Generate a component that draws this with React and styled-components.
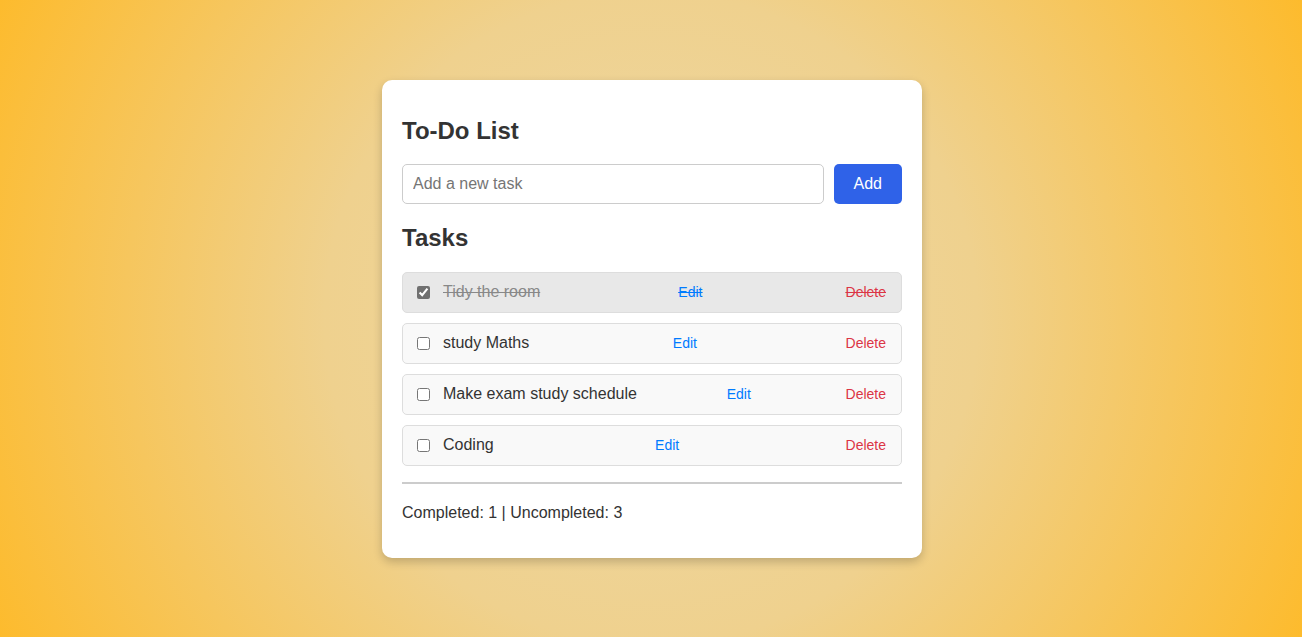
import React, { useState } from "react";
import styled, { createGlobalStyle } from "styled-components";

const GlobalStyle = createGlobalStyle`
  * { box-sizing: border-box; }
  body {
    margin: 0;
    font-family: "Liberation Sans", Arial, sans-serif;
    background: radial-gradient(circle, #edd8a6 0%, #efd18e 45%, #fdbb2d 100%);
    min-height: 100vh;
  }
`;

const Page = styled.div`
  min-height: 100vh;
  display: flex;
  align-items: center;
  justify-content: center;
  padding-left: 2px;
`;

const Card = styled.div`
  width: 540px;
  background: #fff;
  border-radius: 10px;
  padding: 20px;
  box-shadow: 0 4px 10px rgba(0, 0, 0, 0.2);
`;

const Title = styled.h2`
  font-size: 24px;
  color: #333;
  margin: ${props => props.margin};
`;

const AddRow = styled.div`
  display: flex;
  gap: 10px;
`;

const TaskInput = styled.input`
  flex: 1;
  padding: 10px;
  font-size: 16px;
  font-family: inherit;
  border: 1px solid #ccc;
  border-radius: 5px;
  outline: none;
`;

const AddButton = styled.button`
  padding: 10px 20px;
  font-size: 16px;
  font-family: inherit;
  background: #2f62e8;
  color: #fff;
  border: none;
  border-radius: 5px;
  cursor: pointer;
`;

const List = styled.ul`
  list-style: none;
  padding: 0;
  margin: 0 0 16px;
  display: flex;
  flex-direction: column;
  gap: 10px;
`;

const Item = styled.li`
  display: flex;
  align-items: center;
  justify-content: space-between;
  padding: 10px;
  border: 1px solid #ddd;
  border-radius: 5px;
  font-size: 16px;
  background: ${props => (props.done ? "#e8e8e8" : "#f9f9f9")};
  color: ${props => (props.done ? "#888" : "#333")};
  text-decoration: ${props => (props.done ? "line-through" : "none")};
`;

const Left = styled.div`
  display: flex;
  align-items: center;
`;

const Check = styled.input`
  accent-color: #707070;
`;

const TaskText = styled.span`
  margin-left: 10px;
`;

const LinkButton = styled.button`
  background: none;
  border: none;
  padding: 0 5px;
  font-size: 14px;
  font-family: inherit;
  text-decoration: inherit;
  color: ${props => (props.danger ? "#dc3545" : "#007bff")};
  cursor: pointer;
`;

const Footer = styled.div`
  border-top: 2px solid #ccc;
`;

const Stats = styled.p`
  margin: 20px 0 16px;
  font-size: 16px;
  color: #333;
`;

const initialTasks = [
  { id: 1, text: "Tidy the room", done: true },
  { id: 2, text: "study Maths", done: false },
  { id: 3, text: "Make exam study schedule", done: false },
  { id: 4, text: "Coding", done: false },
];

export default function App() {
  const [tasks, setTasks] = useState(initialTasks);
  const [draft, setDraft] = useState("");

  const toggle = id =>
    setTasks(tasks.map(t => (t.id === id ? { ...t, done: !t.done } : t)));
  const remove = id => setTasks(tasks.filter(t => t.id !== id));
  const add = () => {
    if (!draft.trim()) return;
    setTasks([...tasks, { id: Date.now(), text: draft.trim(), done: false }]);
    setDraft("");
  };

  const completed = tasks.filter(t => t.done).length;

  return (
    <Page>
      <GlobalStyle />
      <Card>
        <Title margin="17px 0 19px">To-Do List</Title>
        <AddRow>
          <TaskInput
            placeholder="Add a new task"
            value={draft}
            onChange={e => setDraft(e.target.value)}
          />
          <AddButton onClick={add}>Add</AddButton>
        </AddRow>
        <Title margin="20px 0 20px">Tasks</Title>
        <List>
          {tasks.map(t => (
            <Item key={t.id} done={t.done}>
              <Left>
                <Check
                  type="checkbox"
                  checked={t.done}
                  onChange={() => toggle(t.id)}
                />
                <TaskText>{t.text}</TaskText>
              </Left>
              <LinkButton>Edit</LinkButton>
              <LinkButton danger onClick={() => remove(t.id)}>
                Delete
              </LinkButton>
            </Item>
          ))}
        </List>
        <Footer>
          <Stats>
            Completed: {completed} | Uncompleted: {tasks.length - completed}
          </Stats>
        </Footer>
      </Card>
    </Page>
  );
}
